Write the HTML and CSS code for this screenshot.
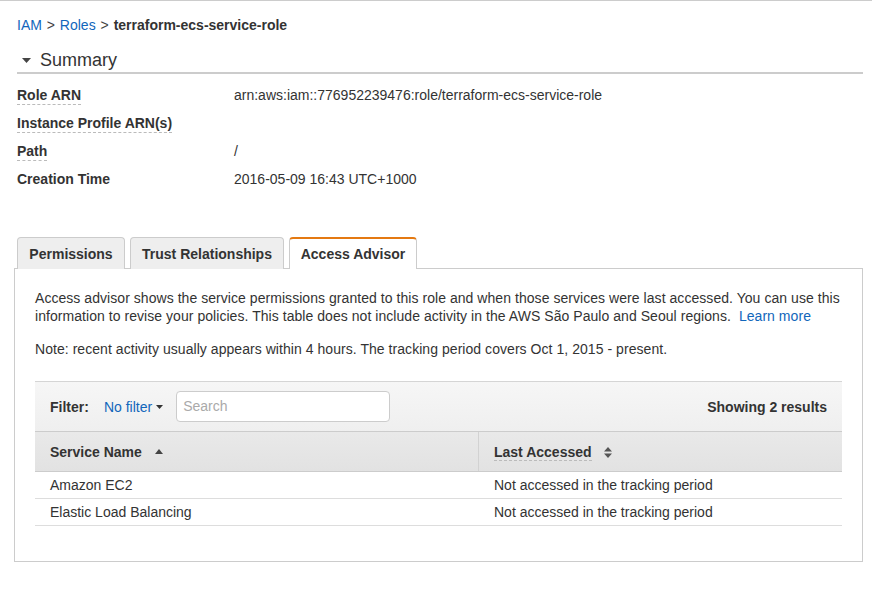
FILE: index.html
```html
<!DOCTYPE html>
<html>
<head>
<meta charset="utf-8">
<link rel="stylesheet" href="styles.css">
</head>
<body>
<div class="page">
  <div class="crumbs"><a class="link">IAM</a> <span class="sep">&gt;</span> <a class="link">Roles</a> <span class="sep">&gt;</span> <b>terraform-ecs-service-role</b></div>

  <div class="summary-head">
    <svg class="caret" width="9" height="5" viewBox="0 0 9 5"><path d="M0 0H9L4.5 5Z" fill="#444"/></svg>
    <span>Summary</span>
  </div>

  <div class="details">
    <div class="dl"><span class="lbl">Role ARN</span></div><div class="dv">arn:aws:iam::776952239476:role/terraform-ecs-service-role</div>
    <div class="dl"><span class="lbl">Instance Profile ARN(s)</span></div><div class="dv"></div>
    <div class="dl"><span class="lbl">Path</span></div><div class="dv">/</div>
    <div class="dl"><span class="plain">Creation Time</span></div><div class="dv">2016-05-09 16:43 UTC+1000</div>
  </div>

  <div class="tabs">
    <div class="tab t1">Permissions</div>
    <div class="tab t2">Trust Relationships</div>
    <div class="tab t3 active">Access Advisor</div>
  </div>

  <div class="panel">
    <p class="intro">Access advisor shows the service permissions granted to this role and when those services were last accessed. You can use this information to revise your policies. This table does not include activity in the AWS São Paulo and Seoul regions. <a class="link more">Learn more</a></p>
    <p class="note">Note: recent activity usually appears within 4 hours. The tracking period covers Oct 1, 2015 - present.</p>

    <div class="table">
      <div class="filterbar">
        <span class="flabel">Filter:</span>
        <span class="fsel link">No filter <svg width="7" height="4" viewBox="0 0 7 4"><path d="M0 0H7L3.5 4Z" fill="#333"/></svg></span>
        <div class="search">Search</div>
        <span class="count">Showing 2 results</span>
      </div>
      <div class="thead">
        <div class="th c1">Service Name <svg class="sort" width="8" height="5" viewBox="0 0 8 5"><path d="M0 5H8L4 0Z" fill="#444"/></svg></div>
        <div class="th c2"><span class="lbl2">Last Accessed</span> <svg class="sort2" width="8" height="11" viewBox="0 0 8 11"><path d="M0 4.5H8L4 0Z M0 6.5H8L4 11Z" fill="#555"/></svg></div>
      </div>
      <div class="tr"><div class="td c1">Amazon EC2</div><div class="td c2">Not accessed in the tracking period</div></div>
      <div class="tr"><div class="td c1">Elastic Load Balancing</div><div class="td c2">Not accessed in the tracking period</div></div>
    </div>
  </div>
</div>
</body>
</html>
```
FILE: styles.css
```css
html, body {
  margin: 0;
  padding: 0;
  background: #fff;
}
body {
  font-family: "Liberation Sans", Arial, sans-serif;
  font-size: 14px;
  color: #333;
  border-top: 1px solid #ccc;
}
.page {
  padding: 14px 9px 0 17px;
}
.link {
  color: #1166bb;
  text-decoration: none;
  cursor: pointer;
}
.more {
  margin-left: 4px;
}
.crumbs {
  line-height: 20px;
  height: 20px;
}
.crumbs .sep {
  color: #444;
  margin: 0 1px;
}
.crumbs b {
  color: #333;
}
.summary-head {
  margin-top: 14px;
  height: 23px;
  display: flex;
  align-items: center;
  border-bottom: 2px solid #ccc;
}
.summary-head .caret {
  margin-left: 5px;
  margin-right: 9px;
}
.summary-head span {
  font-size: 18px;
  color: #333;
  line-height: 24px;
  position: relative;
  top: -1px;
}
.details {
  display: grid;
  grid-template-columns: 217px 1fr;
  grid-auto-rows: 28px;
  margin-top: 7px;
  align-items: center;
}
.dl {
  font-weight: bold;
  color: #333;
}
.lbl {
  border-bottom: 1px dashed #bbb;
  padding-bottom: 1px;
}
.dv {
  color: #333;
}
.tabs {
  margin-top: 44px;
  display: flex;
  gap: 5px;
  height: 31px;
  position: relative;
  z-index: 1;
}
.tab {
  box-sizing: border-box;
  height: 32px;
  border: 1px solid #ccc;
  border-bottom: none;
  border-radius: 4px 4px 0 0;
  background: #eee;
  font-weight: bold;
  color: #333;
  display: flex;
  align-items: center;
  justify-content: center;
  padding-top: 1px;
}
.t1 { width: 108px; }
.t2 { width: 154px; }
.t3 { width: 128px; }
.tab.active {
  background: #fff;
  border-top: 2px solid #e47911;
  padding-top: 0;
}
.panel {
  margin-left: -3px;
  border: 1px solid #ccc;
  padding: 20px 20px 35px 20px;
  height: 237px;
}
.panel p {
  margin: 0;
  line-height: 18px;
  color: #333;
  letter-spacing: 0.05px;
}
.panel .note {
  margin-top: 15px;
}
.table {
  margin-top: 23px;
}
.filterbar {
  height: 49px;
  border-top: 1px solid #d5d5d5;
  background: linear-gradient(#f6f6f6, #efefef);
  display: flex;
  align-items: center;
  padding: 0 15px;
}
.flabel {
  font-weight: bold;
  color: #333;
  margin-right: 15px;
  margin-top: 1px;
}
.fsel {
  display: inline-flex;
  align-items: center;
  gap: 4px;
  margin-right: 13px;
}
.fsel svg {
  margin-top: 1px;
}
.search {
  box-sizing: border-box;
  width: 214px;
  height: 31px;
  border: 1px solid #ccc;
  border-radius: 4px;
  background: #fff;
  color: #aaa;
  padding-left: 6px;
  line-height: 29px;
}
.count {
  margin-left: auto;
  font-weight: bold;
  color: #333;
  margin-top: 1px;
}
.thead {
  display: flex;
  height: 39px;
  border-top: 1px solid #ccc;
  border-bottom: 1px solid #ccc;
  background: linear-gradient(#e9e9e9, #e2e2e2);
}
.th {
  display: flex;
  align-items: center;
  font-weight: bold;
  color: #333;
  padding-top: 1px;
}
.thead .c1 {
  width: 444px;
  box-sizing: border-box;
  padding-left: 15px;
  border-right: 1px solid #d2d2d2;
}
.thead .c2 {
  padding-left: 15px;
}
.sort {
  margin-left: 13px;
  margin-top: -2px;
}
.sort2 {
  margin-left: 12px;
}
.lbl2 {
  border-bottom: 1px dashed #bbb;
  line-height: 16px;
}
.tr {
  display: flex;
  height: 26px;
  border-bottom: 1px solid #ddd;
  align-items: center;
}
.td {
  color: #333;
}
.tr .c1 {
  width: 444px;
  box-sizing: border-box;
  padding-left: 15px;
}
.tr .c2 {
  padding-left: 15px;
}
```
